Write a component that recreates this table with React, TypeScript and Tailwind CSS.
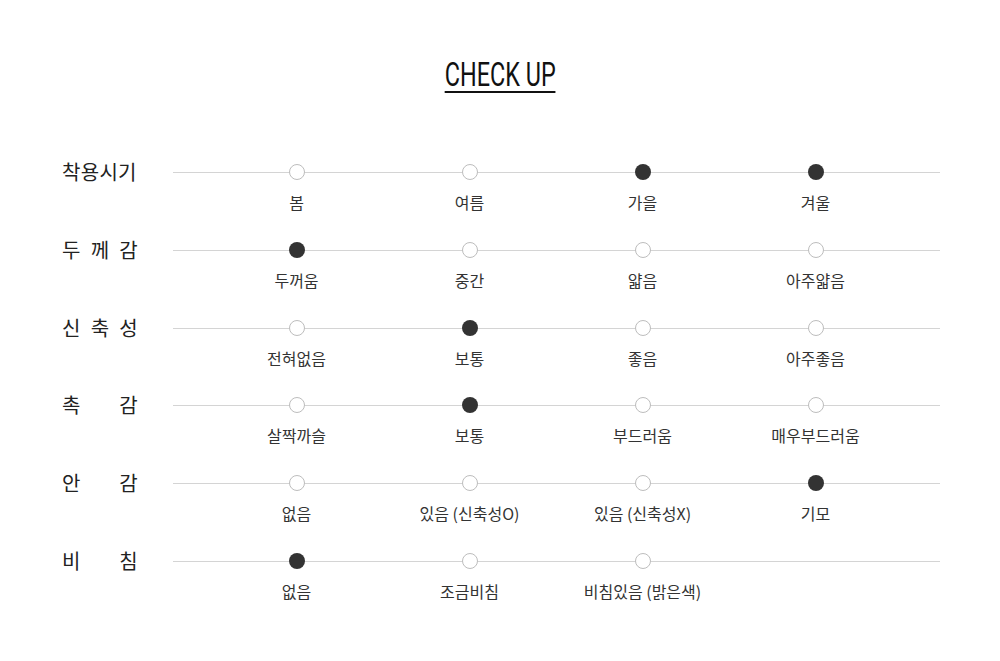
import React from "react";

interface CheckRow {
  label: string[];
  options: string[];
  selected: number;
}

const rows: CheckRow[] = [
  { label: ["착용시기"], options: ["봄", "여름", "가을", "겨울"], selected: -1 },
  { label: ["두", "께", "감"], options: ["두꺼움", "중간", "얇음", "아주얇음"], selected: 0 },
  { label: ["신", "축", "성"], options: ["전혀없음", "보통", "좋음", "아주좋음"], selected: 1 },
  { label: ["촉", "감"], options: ["살짝까슬", "보통", "부드러움", "매우부드러움"], selected: 1 },
  { label: ["안", "감"], options: ["없음", "있음 (신축성O)", "있음 (신축성X)", "기모"], selected: 3 },
  { label: ["비", "침"], options: ["없음", "조금비침", "비침있음 (밝은색)"], selected: 0 },
];

// first row has two picks (가을, 겨울)
const isOn = (rowIdx: number, optIdx: number) =>
  rowIdx === 0 ? optIdx === 2 || optIdx === 3 : rows[rowIdx].selected === optIdx;

function Row({ row, idx }: { row: CheckRow; idx: number }) {
  return (
    <div className="flex h-[77.8px]">
      <div className="flex w-[76px] justify-between text-[20px] leading-[26px] text-[#222] -mt-[13px] h-[26px] tracking-[0.3px]">
        {row.label.map((l, i) => (
          <span key={i}>{l}</span>
        ))}
      </div>
      <div className="relative ml-[35px] w-[767px]">
        <div className="absolute left-0 right-0 top-0 h-px bg-[#d4d4d4]" />
        <div className="relative grid grid-cols-[173px_173px_173px_173px] pl-[37px]">
          {row.options.map((opt, i) => (
            <div key={opt + i} className="flex flex-col items-center">
              <div
                className={
                  isOn(idx, i)
                    ? "-mt-[8px] h-[16px] w-[16px] rounded-full bg-[#333]"
                    : "-mt-[8px] h-[16px] w-[16px] rounded-full border border-[#bdbdbd] bg-white"
                }
              />
              <span className="mt-[12px] whitespace-nowrap text-[16px] leading-[20px] text-[#333]">
                {opt}
              </span>
            </div>
          ))}
        </div>
      </div>
    </div>
  );
}

export default function App() {
  return (
    <div
      className="h-[661px] w-[1000px] bg-white"
      style={{ fontFamily: '"Noto Sans CJK KR", "Noto Sans", sans-serif' }}
    >
      <div className="flex h-[136px] items-start justify-center pt-[60px]">
        <h1
          className="origin-center scale-x-[0.71] border-b-2 border-[#111] pb-[1px] text-[33px] leading-[30px] text-[#111]"
          style={{ fontFamily: 'Roboto, "Liberation Sans", sans-serif' }}
        >
          CHECK UP
        </h1>
      </div>
      <div className="pl-[62px] pt-[36px]">
        {rows.map((r, i) => (
          <Row key={i} row={r} idx={i} />
        ))}
      </div>
    </div>
  );
}
